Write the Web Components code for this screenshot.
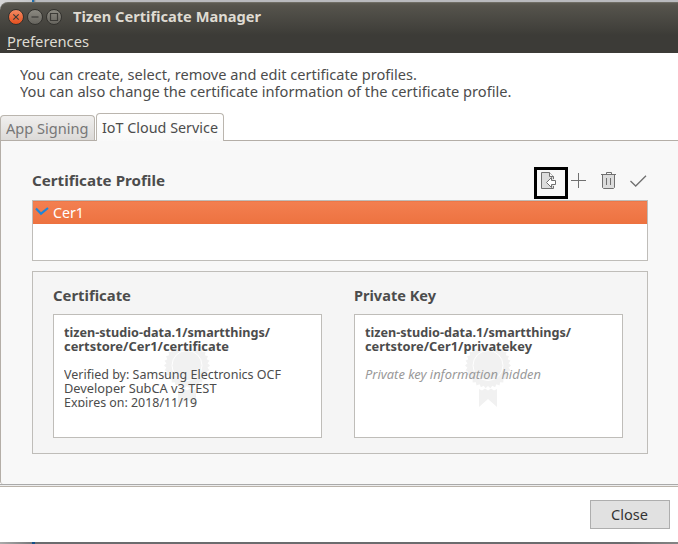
<!DOCTYPE html>
<html lang="en">
<head>
<meta charset="utf-8">
<title>Tizen Certificate Manager</title>
<style>
html,body{margin:0;width:678px;height:544px;overflow:hidden;background:#fff}
body{font-family:"Noto Sans","Open Sans",sans-serif;font-size:14.4px;color:#4c4c4c}
</style>
</head>
<body>
<cert-window></cert-window>
<script>
const define = (name, html, init) => {
  const t = document.createElement('template');
  t.innerHTML = html;
  customElements.define(name, class extends HTMLElement {
    connectedCallback() {
      if (this.shadowRoot) return;
      const root = this.attachShadow({mode: 'open'});
      root.append(t.content.cloneNode(true));
      if (init) init(this, root);
    }
  });
};

/* A single line of text set to a given width (attribute w). */
define('fit-text', `<style>
:host{display:block;white-space:nowrap;line-height:17px;height:17px}
span{display:inline-block;transform-origin:0 50%}
</style><span><slot></slot></span>`, el => {
  el.style.width = el.getAttribute('w') + 'px';
});

define('window-button', `<style>
:host{display:grid;place-items:center;width:16px;height:16px;box-sizing:border-box;border-radius:50%;
border:1px solid #33322e;background:linear-gradient(#8b8981,#66645e)}
:host([kind=close]){background:linear-gradient(#f58a62,#e5501f)}
svg{display:block;fill:none;stroke:#3c3b37;stroke-width:1.2}
path{display:none}
:host([kind=close]) .c,:host([kind=min]) .n,:host([kind=max]) .x{display:block}
</style><svg width="14" height="14"><path class="c" d="M4.300 4.300l5.400 5.400M9.700 4.300l-5.400 5.400"/><path class="n" d="M3.500 7h7"/><path class="x" d="M3.500 3.500h7v7h-7z"/></svg>`);

define('title-bar', `<style>
:host{display:block;height:51px;box-sizing:border-box;border-radius:8px 0 0 0;color:#dfdbd2;
background:linear-gradient(#5d5b53 0,#55534c 3px,#403f3a 28px,#3c3b37 32px);border-top:1px solid #6f6d65}
.t{display:flex;align-items:center;gap:3px;height:27px;padding-left:7.500px}
.t fit-text{margin-left:8px;font-weight:700}
.m{padding:3px 0 0 7px;display:flex}
u{text-decoration-thickness:1px;text-underline-offset:2px}
</style><div class="t"><window-button kind="close"></window-button><window-button kind="min"></window-button><window-button kind="max"></window-button><fit-text w="188">Tizen Certificate Manager</fit-text></div>
<div class="m"><fit-text w="82"><u>P</u>references</fit-text></div>`);

define('tab-item', `<style>
:host{display:block;box-sizing:border-box;width:95px;height:25px;padding:4px 0 0 5px;border:1px solid #bab5ae;border-bottom:0;
border-radius:4px 4px 0 0;background:linear-gradient(#f0efee,#dcdad8);color:#777}
:host([active]){width:128px;height:28px;padding:5px 0 0 5px;margin-left:1px;margin-bottom:-1px;background:linear-gradient(#fff,#f9f9f9);color:#4c4c4c}
</style><slot></slot>`);

define('tool-icon', `<style>
:host{display:block;width:18px;height:20px}
svg{display:none;fill:none;stroke:#707070;stroke-width:1}
:host([kind=import]) .i,:host([kind=add]) .a,:host([kind=del]) .d,:host([kind=ok]) .k{display:block}
</style>
<svg class="i" width="18" height="20"><path fill="#dcdcdc" d="M13.500 8V5.500l-4-4h-8v16h12V15"/><path fill="#f7f7f7" d="M9.500 1.500v4h4"/><path fill="#fff" d="M6.500 11.500l5-5v3h4v4h-4v3z"/></svg>
<svg class="a" width="18" height="20"><path d="M8.500 2v15M1 9.500h15"/></svg>
<svg class="d" width="18" height="20"><path d="M6.500 3.500v-2h5v2"/><path fill="#dcdcdc" d="M2.500 4v12.500l1 1h10l1-1V4"/><path d="M1 3.500h15M6.500 7v7M10.500 7v7"/></svg>
<svg class="k" width="18" height="20"><path stroke-width="1.300" d="M.5 10l5.200 5L16 4.700"/></svg>`);

define('tool-bar', `<style>
:host{display:flex;height:32px}
.box{box-sizing:border-box;width:34px;height:32px;border:3px solid #000;padding:1px 0 0 3px}
.r{display:flex;gap:12px;padding:4px 0 0 2px}
</style><div class="box"><tool-icon kind="import"></tool-icon></div>
<div class="r"><tool-icon kind="add"></tool-icon><tool-icon kind="del"></tool-icon><tool-icon kind="ok"></tool-icon></div>`);

define('profile-list', `<style>
:host{display:block;box-sizing:border-box;width:616px;height:61px;border:1px solid #bfbdb9;background:#fff}
.row{display:flex;height:23px;box-sizing:border-box;padding:3px 0 0 2px;gap:4px;color:#fff;background:linear-gradient(#e8703f 0,#f37f50 1px,#ed7240);}
svg{display:block;margin-top:2px}
</style><div class="row"><svg width="14" height="12"><path d="M1 2.500l5 5.200L13 2" fill="none" stroke="#1e86d8" stroke-width="2.200"/></svg><fit-text w="31">Cer1</fit-text></div>`);

/* Rosette watermark with its ribbon. */
define('seal-mark', `<style>:host{display:block;width:46px;height:65px}svg{display:block}</style>
<svg width="46" height="65"><path class="s" fill="#f1f1f1"/><circle cx="23" cy="23.500" r="15" fill="none" stroke="#fff" stroke-width="1"/>
<path fill="#f1f1f1" d="M14 47l3 1.500 3-2 3 2 3-2 3 2 3-1.500v18l-9-8-9 8z"/></svg>`, (el, root) => {
  let d = '';
  for (let i = 0; i < 60; i++) {
    const r = i % 2 ? 20.6 : 23, a = i * Math.PI / 30;
    d += (i ? 'L' : 'M') + (23 + r * Math.cos(a)).toFixed(2) + ' ' + (23.5 + r * Math.sin(a)).toFixed(2);
  }
  root.querySelector('.s').setAttribute('d', d + 'z');
});

define('info-card', `<style>
:host{display:block;width:269px}
.b{position:relative;box-sizing:border-box;height:124px;margin-top:10px;border:1px solid #bfbdb9;background:#fff;padding:10px 0 0 10px;font-size:12.800px;overflow:hidden}
seal-mark{position:absolute;left:110px;top:27px;clip-path:inset(7px 0 0 0)}
.t{position:relative;height:82px;overflow:hidden}
.t ::slotted(fit-text){line-height:14px;height:14px}
</style><slot name="head"></slot><div class="b"><seal-mark></seal-mark><div class="t"><slot></slot></div></div>`);

define('push-button', `<style>
:host{display:grid;justify-content:center;box-sizing:border-box;width:80px;height:29px;padding:5px 1px 0 0;border:1px solid #aeaeae;background:#e1e1e1;color:#333}
</style><slot></slot>`);

define('cert-window', `<style>
:host{display:block;width:678px;height:544px;background:linear-gradient(90deg,#d5d5d6 0,#c5c6c8 32px,#1c6fb0 32px,#1c6fb0 34px,#777a7d 34px,#b9babe 36px) top/100% 12px no-repeat #fff}
.top{height:2px}
.intro{height:59px;box-sizing:border-box;padding:13px 0 0 20px;background:#fff}
.tabs{display:flex;align-items:flex-end;height:28px;position:relative}
.panel{height:344px;box-sizing:border-box;border:1px solid #b4aea7;border-right:0;border-bottom:0;border-radius:0 0 0 3px;background:#f8f8f8;padding:26px 0 0 31px}
.head{display:flex;height:33px}
.head>fit-text{font-weight:700;margin-top:5px}
tool-bar{margin-left:369px}
.details{display:flex;gap:32px;box-sizing:border-box;width:616px;height:183px;margin-top:10px;border:1px solid #bfbdb9;background:#f5f5f5;padding:15px 0 0 20px}
.bold{font-weight:700}.it{font-style:italic;color:#999}
.line{height:3px;box-sizing:border-box;border:1px solid #aaa;border-width:1px 0;border-bottom-color:#bab3aa;background:#eee}
.foot{display:flex;justify-content:flex-end;height:55px;box-sizing:border-box;padding:13px 8px 0 0;background:#fff}
.edge{height:2px;background:linear-gradient(90deg,#aaa 0,#77787a 32px,#14508a 32px,#14508a 35px,#6b6c6e 35px,#6b6c6e 630px,#858585)}
</style>
<div class="top"></div>
<title-bar></title-bar>
<div class="intro"><fit-text w="397">You can create, select, remove and edit certificate profiles.</fit-text><fit-text w="491.500">You can also change the certificate information of the certificate profile.</fit-text></div>
<div class="tabs"><tab-item><fit-text w="82.500">App Signing</fit-text></tab-item><tab-item active><fit-text w="116">IoT Cloud Service</fit-text></tab-item></div>
<div class="panel">
<div class="head"><fit-text w="133">Certificate Profile</fit-text><tool-bar></tool-bar></div>
<profile-list></profile-list>
<div class="details">
<info-card><fit-text slot="head" class="bold" w="78">Certificate</fit-text>
<fit-text class="bold" w="206">tizen-studio-data.1/smartthings/</fit-text><fit-text class="bold" w="165">certstore/Cer1/certificate</fit-text><fit-text w="1"></fit-text>
<fit-text w="217">Verified by: Samsung Electronics OCF</fit-text><fit-text w="152.500">Developer SubCA v3 TEST</fit-text><fit-text w="133">Expires on: 2018/11/19</fit-text></info-card>
<info-card><fit-text slot="head" class="bold" w="82">Private Key</fit-text>
<fit-text class="bold" w="206">tizen-studio-data.1/smartthings/</fit-text><fit-text class="bold" w="167">certstore/Cer1/privatekey</fit-text><fit-text w="1"></fit-text>
<fit-text class="it" w="176">Private key information hidden</fit-text></info-card>
</div></div>
<div class="line"></div>
<div class="foot"><push-button><fit-text w="37">Close</fit-text></push-button></div>
<div class="edge"></div>`);

/* Scale each line once the whole tree has its fonts. */
const fit = root => root.querySelectorAll('*').forEach(e => {
  if (e.localName === 'fit-text') {
    const s = e.shadowRoot.querySelector('span');
    const r = s.getBoundingClientRect().width;
    if (r) s.style.transform = 'scaleX(' + e.getAttribute('w') / r + ')';
  }
  if (e.shadowRoot) fit(e.shadowRoot);
});
fit(document);
</script>
</body>
</html>
